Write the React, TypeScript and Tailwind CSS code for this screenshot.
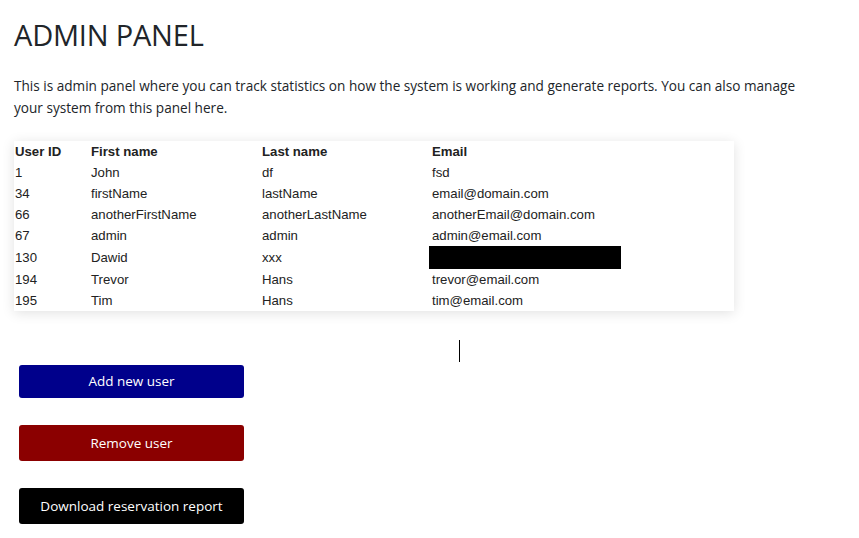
const users = [
  { id: '1', first: 'John', last: 'df', email: 'fsd' },
  { id: '34', first: 'firstName', last: 'lastName', email: 'email@domain.com' },
  { id: '66', first: 'anotherFirstName', last: 'anotherLastName', email: 'anotherEmail@domain.com' },
  { id: '67', first: 'admin', last: 'admin', email: 'admin@email.com' },
  { id: '130', first: 'Dawid', last: 'xxx', email: null },
  { id: '194', first: 'Trevor', last: 'Hans', email: 'trevor@email.com' },
  { id: '195', first: 'Tim', last: 'Hans', email: 'tim@email.com' },
]

export default function App() {
  return (
    <div className="relative min-h-[538px] bg-white px-[14px] pt-[18px] text-[#212529] [font-family:'Open_Sans','Noto_Sans',sans-serif]">
      <h1 className="text-[29px] leading-[34px] font-normal tracking-[-0.2px]">ADMIN PANEL</h1>

      <p className="mt-[23px] max-w-[800px] text-[13.6px] leading-[22px]">
        This is admin panel where you can track statistics on how the system is working and generate reports. You can also manage your system from this panel here.
      </p>

      <div className="mt-[22px] w-[720px] bg-white shadow-[0_2px_12px_rgba(0,0,0,0.12)] [font-family:'Liberation_Sans',Arial,sans-serif] text-[13.2px] text-[#222]">
        <table className="w-full border-collapse">
          <thead>
            <tr className="h-[21px]">
              <th className="w-[77px] pl-[1px] text-left font-bold">User ID</th>
              <th className="w-[171px] text-left font-bold">First name</th>
              <th className="w-[170px] text-left font-bold">Last name</th>
              <th className="text-left font-bold">Email</th>
            </tr>
          </thead>
          <tbody>
            {users.map((u) => (
              <tr key={u.id} className="h-[21px]">
                <td className="pl-[1px]">{u.id}</td>
                <td>{u.first}</td>
                <td>{u.last}</td>
                <td>
                  {u.email ?? <div className="-ml-[3px] h-[23px] w-[192px] bg-black" />}
                </td>
              </tr>
            ))}
          </tbody>
        </table>
      </div>

      {/* text caret */}
      <div className="absolute left-[459px] top-[340px] h-[22px] w-px bg-black" />

      <div className="mt-[54px] flex flex-col gap-[27px] pl-[5px] text-[13.5px] text-white">
        <button className="h-[33px] w-[225px] rounded-[3px] bg-[#00008b]">Add new user</button>
        <button className="h-[36px] w-[225px] rounded-[3px] bg-[#8b0000]">Remove user</button>
        <button className="h-[36px] w-[225px] rounded-[3px] bg-black">Download reservation report</button>
      </div>
    </div>
  )
}
